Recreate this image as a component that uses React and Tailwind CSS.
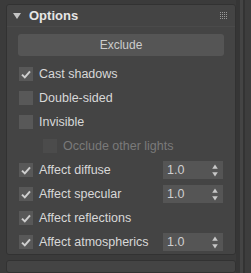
import React from 'react';

const FONT = { fontFamily: '"Liberation Sans", Arial, sans-serif' };

function Check({ checked, disabled }) {
    return (
        <div className={`w-[14px] h-[14px] shrink-0 flex items-center justify-center ${disabled ? 'bg-[#4b4b4b]' : 'bg-[#585858]'}`}>
            {checked && (
                <svg width="10" height="9" viewBox="0 0 10 9">
                    <path d="M1 4.6 L3.8 7.4 L9 1.4" fill="none" stroke="#cfcfcf" strokeWidth="2" />
                </svg>
            )}
        </div>
    );
}

function Spinner({ value }) {
    return (
        <div className="ml-auto w-[60px] h-[18px] bg-[#555555] flex items-center pl-[4px] pr-[5px] text-[#cfcfcf]">
            <span>{value}</span>
            <svg className="ml-auto" width="6" height="13" viewBox="0 0 6 13">
                <path d="M3 0.5 L5.8 4.8 L0.2 4.8 Z" fill="#c8c8c8" />
                <path d="M3 12.5 L5.8 8.2 L0.2 8.2 Z" fill="#c8c8c8" />
            </svg>
        </div>
    );
}

function Row({ label, checked, disabled, indent, value }) {
    return (
        <div className={`h-[24px] flex items-center pr-[12px] ${indent ? 'pl-[36px]' : 'pl-[12px]'}`}>
            <Check checked={checked} disabled={disabled} />
            <span className={`ml-[6px] ${disabled ? 'text-[#7a7a7a]' : 'text-[#d8d8d8]'}`}>{label}</span>
            {value && <Spinner value={value} />}
        </div>
    );
}

function Grip() {
    return (
        <div className="grid grid-cols-4 gap-[1px]">
            {Array.from({ length: 16 }).map((_, i) => (
                <div key={i} className="w-[1px] h-[1px] bg-[#9a9a9a]" />
            ))}
        </div>
    );
}

export default function App() {
    return (
        <div className="w-[251px] h-[273px] bg-[#3b3b3b] flex overflow-hidden text-[12.5px]" style={FONT}>
            <div className="w-[236px] pl-[6px] pt-[4px] flex flex-col">
                <div className="h-[261px] bg-[#444444] border border-[#323232] rounded-[3px] flex flex-col">
                    <div className="h-[22px] flex items-center pl-[6px] pr-[8px] border-b border-[#4a4a4a]">
                        <svg width="8" height="6" viewBox="0 0 8 6">
                            <path d="M0 0 L8 0 L4 6 Z" fill="#c4c4c4" />
                        </svg>
                        <span className="ml-[8px] text-[13px] font-bold text-[#e6e6e6]">Options</span>
                        <div className="ml-auto">
                            <Grip />
                        </div>
                    </div>
                    <div className="mt-[7px] mx-[11px] h-[22px] rounded-[3px] bg-[#555555] flex items-center justify-center text-[12px] text-[#cccccc]">
                        Exclude
                    </div>
                    <div className="mt-[6px] flex flex-col">
                        <Row label="Cast shadows" checked />
                        <Row label="Double-sided" />
                        <Row label="Invisible" />
                        <Row label="Occlude other lights" disabled indent />
                        <Row label="Affect diffuse" checked value="1.0" />
                        <Row label="Affect specular" checked value="1.0" />
                        <Row label="Affect reflections" checked />
                        <Row label="Affect atmospherics" checked value="1.0" />
                    </div>
                </div>
                <div className="mt-[5px] h-[20px] bg-[#444444] border border-[#323232] rounded-[3px]" />
            </div>
            <div className="flex-1 flex">
                <div className="w-[4px] bg-[#363636]" />
                <div className="w-[3px] bg-[#444444]" />
                <div className="w-[2px] bg-[#333333]" />
                <div className="flex-1 bg-[#3d3d3d]" />
            </div>
        </div>
    );
}
